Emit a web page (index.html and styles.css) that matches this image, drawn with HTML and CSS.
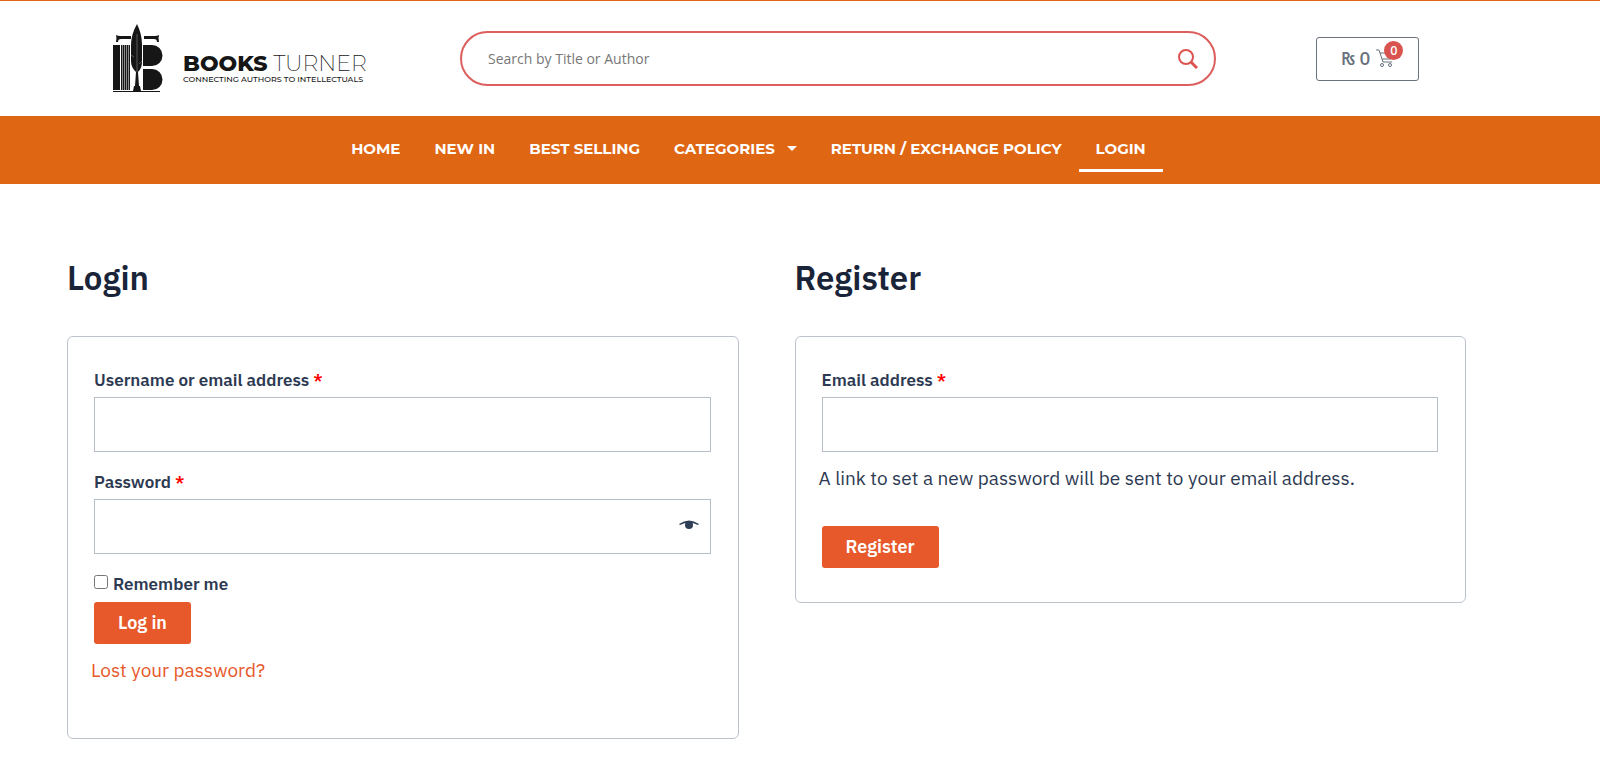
FILE: index.html
```html
<!DOCTYPE html>
<html lang="en">
<head>
    <meta charset="UTF-8">
    <meta name="viewport" content="width=device-width, initial-scale=1.0">
    <title>Login - Books Turner</title>
    <link rel="stylesheet" href="styles.css">
</head>
<body>
    <header class="header">
        <a href="#" class="logo">
            <svg class="logo-mark" viewBox="0 0 50 70" aria-hidden="true">
                <g fill="#161616">
                    <path d="M3 18q1-4 0-7 2 1 4 1h11v3H8q-3 0-3 3zM46 18q-1-4 0-7-2 1-4 1H31v3h10q3 0 3 3z"/>
                    <path d="M0 21h7v45H0z"/>
                    <path d="M8 21h1v45H8zM10 21h1v45h-1zM12 21h1v45h-1zM14 21h1v45h-1zM16 21h1v45h-1z"/>
                    <path d="M8 21h9v45H8z" opacity=".5"/>
                    <path d="M30 21h9a10 10 0 0 1 0 21h-9zM30 45h9a10 10 0 0 1 0 21h-9z"/>
                    <path d="M0 67h47v1H0z"/>
                    <path d="M24 0c3 6 5 13 5 21v16c0 5-1 8-4 11l1 14h1l1 5h-8l1-5h1l1-14c-3-3-5-6-5-11V21C18 14 20 7 24 0z"/>
                </g>
                <path d="M24 10v38M18 31l3 2M29 37l-3 3" stroke="#999" stroke-width=".5" fill="none"/>
            </svg>
            <span class="logo-text">
                <span class="logo-name"><b>BOOKS</b> TURNER</span>
                <span class="logo-tagline">CONNECTING AUTHORS TO INTELLECTUALS</span>
            </span>
        </a>
        <form class="search" role="search">
            <input type="search" aria-label="Search" placeholder="Search by Title or Author">
            <button type="submit" aria-label="Search">
                <svg viewBox="0 0 20 20" width="20" height="20" fill="none" stroke="#dc5350">
                    <circle cx="8" cy="8" r="7" stroke-width="2"/>
                    <path d="M13 13l6 6" stroke-width="3"/>
                </svg>
            </button>
        </form>
        <div class="cart">
            <a href="#" class="cart-button">
                <span>₨ 0</span>
                <span class="cart-icon">
                    <svg viewBox="0 0 18 19" width="18" height="19" fill="none" stroke="#69727d">
                        <path d="M0 1h3l4 12h9M4 4h13l-2 6H6"/>
                        <circle cx="6" cy="16" r="1.5"/>
                        <circle cx="14" cy="16" r="1.5"/>
                    </svg>
                    <span class="cart-count">0</span>
                </span>
            </a>
        </div>
    </header>

    <nav class="nav">
        <a href="#">HOME</a>
        <a href="#">NEW IN</a>
        <a href="#">BEST SELLING</a>
        <a href="#">CATEGORIES <span class="caret"></span></a>
        <a href="#">RETURN / EXCHANGE POLICY</a>
        <a href="#" class="active">LOGIN</a>
    </nav>

    <main class="account">
        <section>
            <h2>Login</h2>
            <form class="card card-login">
                <div class="form-group">
                    <label for="username">Username or email address <span class="required">*</span></label>
                    <input type="text" id="username" name="username">
                </div>
                <div class="form-group">
                    <label for="password">Password <span class="required">*</span></label>
                    <div class="password-field">
                        <input type="password" id="password" name="password">
                        <button type="button" class="show-password" aria-label="Show password">
                            <svg viewBox="0 0 20 10" width="20" height="10">
                                <path d="M0 4Q10-3 20 4l-1 1Q10 0 1 5z" fill="#2f3f55"/>
                                <circle cx="10" cy="5" r="4" fill="#2f3f55"/>
                            </svg>
                        </button>
                    </div>
                </div>
                <div class="remember">
                    <input type="checkbox" id="rememberme" name="rememberme">
                    <label for="rememberme">Remember me</label>
                </div>
                <button type="submit" class="button">Log in</button>
                <p class="note"><a href="#">Lost your password?</a></p>
            </form>
        </section>
        <section>
            <h2>Register</h2>
            <form class="card">
                <div class="form-group">
                    <label for="reg_email">Email address <span class="required">*</span></label>
                    <input type="email" id="reg_email" name="email">
                </div>
                <p class="note note-register">A link to set a new password will be sent to your email address.</p>
                <button type="submit" class="button">Register</button>
            </form>
        </section>
    </main>
</body>
</html>
```
FILE: styles.css
```css
* { box-sizing: border-box; }
body {
    margin: 0;
    background-color: #fff;
    color: #2d3a52;
    font-family: "IBM Plex Sans", "Noto Sans", sans-serif;
    font-size: 19px;
    font-weight: 400;
}
a { text-decoration: none; color: inherit; }
button { font-family: inherit; cursor: pointer; }

/* Header */
.header {
    display: grid;
    grid-template-columns: 460fr 756fr 384fr;
    align-items: center;
    height: 116px;
    border-top: 1px solid #df6613;
}
.logo { display: flex; gap: 20px; padding-left: 113px; color: #161616; }
.logo-mark { width: 50px; height: 70px; flex: none; }
.logo-text {
    display: flex;
    flex-direction: column;
    padding-top: 29px;
    font-family: Montserrat, Inter, sans-serif;
    white-space: nowrap;
}
.logo-name { font-size: 22px; line-height: 22px; font-weight: 200; }
.logo-name b { font-weight: 800; }
.logo-tagline { font-size: 8px; line-height: 8px; font-weight: 500; }
.search {
    display: flex;
    align-items: center;
    height: 55px;
    padding: 0 16px 0 26px;
    border: 2px solid #dc5f5e;
    border-radius: 28px;
}
.search input {
    flex: 1;
    min-width: 0;
    padding: 0;
    border: none;
    outline: none;
    background: none;
    font: 14px "Open Sans", sans-serif;
}
.search input::placeholder { color: #777; opacity: 1; }
.search button { display: flex; padding: 0; border: none; background: none; }
.cart { padding-left: 100px; }
.cart-button {
    display: inline-flex;
    align-items: center;
    gap: 6px;
    height: 44px;
    padding: 0 24px;
    border: 1px solid #69727d;
    border-radius: 3px;
    color: #69727d;
    font-size: 18px;
    font-weight: 500;
}
.cart-icon { position: relative; display: flex; }
.cart-count {
    position: absolute;
    top: -8px;
    right: -9px;
    width: 19px;
    height: 19px;
    border-radius: 50%;
    background-color: #d9534f;
    color: #fff;
    font-size: 12px;
    line-height: 19px;
    text-align: center;
}

/* Navigation */
.nav {
    display: flex;
    justify-content: center;
    height: 68px;
    padding: 12px 103px 12px 0;
    background-color: #df6613;
    color: #fff;
    font-family: Montserrat, Inter, sans-serif;
    font-size: 15px;
    font-weight: 700;
}
.nav a { display: flex; align-items: center; padding: 0 17px; border-bottom: 3px solid transparent; }
.nav a.active { border-bottom-color: #fff; }
.caret {
    margin-left: 12px;
    border: 5px solid transparent;
    border-top-color: #fff;
    border-bottom: none;
}

/* Login and register forms */
.account {
    display: grid;
    grid-template-columns: 1fr 1fr;
    gap: 56px;
    padding: 73px 134px 32px 67px;
}
h2 { margin: 0 0 37px; color: #1a2438; font-size: 33px; line-height: 42px; font-weight: 600; }
.card { padding: 31px 27px 34px 26px; border: 1px solid #bcc3cb; border-radius: 6px; }
.card-login { padding-bottom: 42px; }
.form-group { margin-bottom: 18px; }
label { font-size: 17px; line-height: 24px; font-weight: 600; }
.form-group label { display: block; margin-bottom: 5px; }
.required { color: #f00; }
.form-group input {
    display: block;
    width: 100%;
    height: 55px;
    padding: 0 16px;
    border: 1px solid #b5bdc7;
    background-color: #fff;
    font-size: 18px;
}
.password-field { position: relative; }
.show-password {
    position: absolute;
    top: 21px;
    right: 12px;
    display: flex;
    padding: 0;
    border: none;
    background: none;
}
.remember { display: flex; gap: 5px; margin-bottom: 6px; }
.remember input { width: 14px; height: 14px; margin: 3px 0 0; }
.button {
    display: block;
    padding: 0 24px;
    border: none;
    border-radius: 3px;
    background-color: #e7582a;
    color: #fff;
    font-size: 18px;
    line-height: 42px;
    font-weight: 600;
}
.note { margin: 12px -3px; line-height: 28px; }
.note a { color: #e7582a; }
.note-register { margin: -6px -3px 34px; }
```
